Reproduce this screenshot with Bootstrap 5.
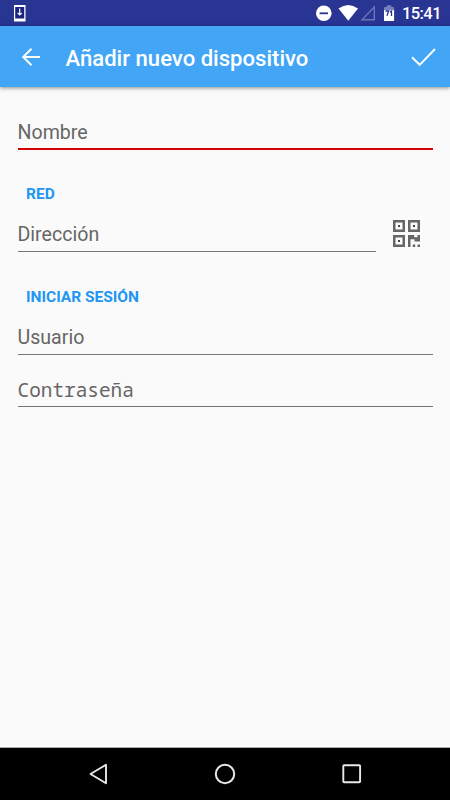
<!DOCTYPE html>
<html lang="es">
<head>
<meta charset="utf-8">
<meta name="viewport" content="width=device-width, initial-scale=1">
<title>Añadir nuevo dispositivo</title>
<link href="https://cdn.jsdelivr.net/npm/bootstrap@5.3.0/dist/css/bootstrap.min.css" rel="stylesheet">
<style>
  body { font-family: Roboto, "Liberation Sans", sans-serif; background: #fafafa; height: 100vh; overflow: hidden; }
  svg { display: block; flex: none; }
  .status-bar { height: 26px; background: #283593; color: #fff; padding-left: 13px; padding-right: 9px; }
  .clock { font-size: 16.5px; line-height: 26px; margin-left: 7px; padding-top: 1px; font-weight: 500; letter-spacing: -.55px; }
  .app-bar { height: 61px; background: #42a5f5; padding: 0 14px 0 20px; box-shadow: 0 1px 4px rgba(0,0,0,.45); }
  .app-title { font-size: 22.1px; font-weight: 500; line-height: 30px; color: #fff; margin: 3px 0 0 23.5px; }
  .device-form { padding: 27px 17.5px 0; }
  .line-input, .line-input:focus { display: block; height: 37px; padding: 3px 0 0; border: 0; border-bottom: 1px solid #757575; border-radius: 0; background: transparent; font-size: 19.6px; line-height: 33px; box-shadow: none; }
  .line-input::placeholder { color: #666; opacity: 1; }
  .line-input.required-line { height: 36px; border-bottom: 2px solid #d50000; padding: 3px 0 0; }
  .line-input.secret { font-family: "Noto Sans Mono", "Droid Sans Mono", "DejaVu Sans Mono", monospace; font-size: 19.4px; height: 36px; padding-top: 2px; }
  .section-title { font-size: 15.5px; font-weight: 700; line-height: 20px; color: #2196f3; margin: 34px 0 11px 8.5px; }
  .section-title.sign-in { margin-top: 35px; }
  .scan-btn { width: 57px; padding: 0 0 0 17px; height: 37px; }
  .nav-keys { height: 53px; background: #000; border-top: 1px solid #aaa; padding: 0 88px; }
</style>
</head>
<body class="d-flex flex-column">
<div class="status-bar d-flex align-items-center">
  <svg width="13" height="18" viewBox="0 0 13 18" class="me-auto"><rect x="1" y="1" width="11.500" height="16.5" fill="#fff"/><rect x="2.200" y="3" width="9" height="11.500" fill="#1a237e"/><path d="M6.700 4.500v6.500M4.700 9l2 2 2-2" fill="none" stroke="#fff" stroke-width="1.200"/></svg>
  <svg width="80" height="26" viewBox="315 0 80 26">
    <circle cx="323.8" cy="13.3" r="7.8" fill="#fff"/><path d="M319.6 13.3h8.4" stroke="#283593" stroke-width="1.8"/>
    <path d="M338.5 8.6Q348.3 1.4 358 8.6L348.3 20.7Z" fill="#fff"/>
    <path d="M374.3 7v12.8H362Z" fill="none" stroke="#6b75b8" stroke-width="1.4"/>
    <path d="M384 8q0-1 1-1h1.800V5.300h4.500V7h1.800q1 0 1 1v3H384Z" fill="#7780b8"/>
    <path d="M384 10.200h10.100V21H384Z" fill="#fff"/>
    <path d="M385.500 11h3.200l-1.800 4.800M390 12.200l1.500-1.200v5" fill="none" stroke="#283593" stroke-width="1.300"/>
  </svg>
  <span class="clock">15:41</span>
</div>
<header class="app-bar d-flex align-items-center">
  <a href="#" aria-label="Atrás"><svg width="22" height="20" viewBox="0 0 22 20"><path d="M20 10H3.200M11.500 1.800L3.200 10l8.300 8.200" fill="none" stroke="#fff" stroke-width="1.900"/></svg></a>
  <h1 class="app-title me-auto text-nowrap">Añadir nuevo dispositivo</h1>
  <a href="#" aria-label="Guardar"><svg width="26" height="20" viewBox="0 0 26 20"><path d="M2 10.200L9.700 17.800 25 2" fill="none" stroke="#fff" stroke-width="1.900"/></svg></a>
</header>
<form class="device-form flex-grow-1">
  <input class="form-control line-input required-line" type="text" placeholder="Nombre">
  <h2 class="section-title">RED</h2>
  <div class="d-flex">
    <input class="form-control line-input" type="text" placeholder="Dirección">
    <button type="button" class="btn border-0 flex-shrink-0 scan-btn" aria-label="Escanear código QR">
      <svg width="27" height="27" viewBox="0 0 27 27">
        <path d="M0 0h12v12H0zM2.500 2.500v7h7v-7zM15 0h12v12H15zM17.500 2.500v7h7v-7zM0 15h12v12H0zM2.500 17.500v7h7v-7z" fill="#666" fill-rule="evenodd"/>
        <path d="M5 5h2v2H5zM20 5h2v2h-2zM5 20h2v2H5z" fill="#444"/>
        <path d="M15 15h6.200v2.300h3.300V15H27v6.500h-5.500v-2.200h-4V27H15zM19.700 24.500h2.500V27h-2.500zM24.500 24.500H27V27h-2.500z" fill="#666"/>
      </svg>
    </button>
  </div>
  <h2 class="section-title sign-in">INICIAR SESIÓN</h2>
  <input class="form-control line-input mb-3" type="text" placeholder="Usuario">
  <input class="form-control line-input secret" type="password" placeholder="Contraseña">
</form>
<nav class="nav-keys d-flex align-items-center justify-content-between">
  <svg width="20" height="22" viewBox="0 0 20 22"><path d="M18 1.800v18.400L2.500 11Z" fill="none" stroke="#e8e8e8" stroke-width="1.900" stroke-linejoin="round"/></svg>
  <svg width="22" height="22" viewBox="0 0 22 22"><circle cx="11" cy="11" r="9.200" fill="none" stroke="#e8e8e8" stroke-width="2"/></svg>
  <svg width="20" height="20" viewBox="0 0 20 20"><rect x="1.300" y="1.300" width="16.800" height="17" rx=".8" fill="none" stroke="#e8e8e8" stroke-width="1.900"/></svg>
</nav>
<script src="https://cdn.jsdelivr.net/npm/bootstrap@5.3.0/dist/js/bootstrap.bundle.min.js"></script>
</body>
</html>
